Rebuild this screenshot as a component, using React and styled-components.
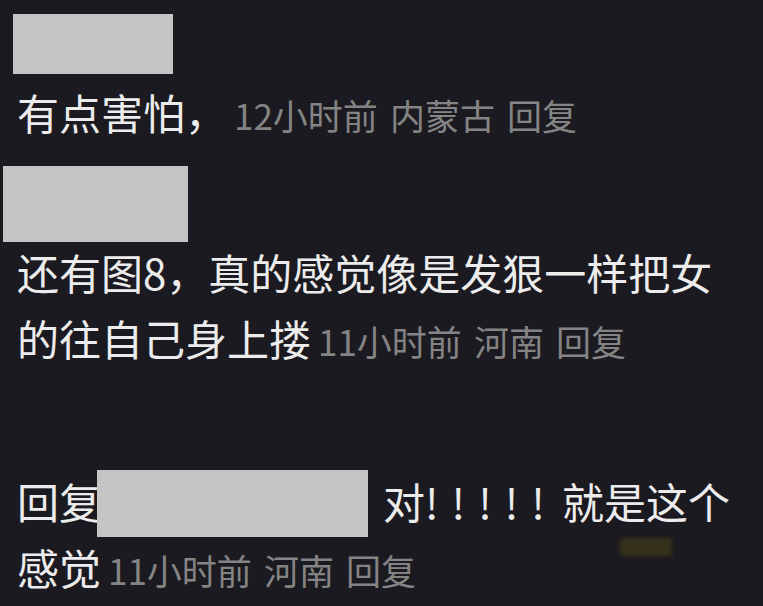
import React from "react";
import styled, { createGlobalStyle } from "styled-components";

const GlobalStyle = createGlobalStyle`
  html, body {
    margin: 0;
    padding: 0;
    background: #1b1a20;
  }
  body {
    font-family: "Noto Sans CJK SC", "Noto Sans", sans-serif;
  }
`;

const Page = styled.div`
  position: relative;
  width: 763px;
  height: 606px;
  overflow: hidden;
  background: #1b1a20;
  padding: 14px 16px 0 17px;
  box-sizing: border-box;
`;

const Comment = styled.div`
  display: flex;
  flex-direction: column;
  margin-top: ${({ $gap }) => $gap || 0}px;
`;

const NameMask = styled.div`
  width: ${({ $w }) => $w}px;
  height: ${({ $h }) => $h}px;
  margin-left: ${({ $offset }) => $offset || 0}px;
  margin-bottom: ${({ $after }) => $after || 0}px;
  background: #c5c5c5;
  flex-shrink: 0;
`;

const Body = styled.p`
  margin: 0;
  width: 720px;
  font-size: 42px;
  line-height: 66px;
  color: #ececec;
`;

const Row = styled.div`
  display: flex;
  align-items: flex-start;
  height: 66px;
  font-size: 42px;
  line-height: 66px;
  color: #ececec;
  white-space: nowrap;
`;

const InlineMask = styled(NameMask)`
  margin-top: 2px;
`;

const Reply = styled.span`
  margin-left: 15px;
`;

const Bang = styled.span`
  letter-spacing: 13px;
  margin-right: 4px;
`;

const MetaWrap = styled.span`
  font-size: 35px;
  line-height: 36px;
  color: #848484;
  margin-left: 7px;
`;

const MetaItem = styled.span`
  & + & {
    margin-left: 12px;
  }
`;

const Smudge = styled.div`
  position: absolute;
  left: 620px;
  top: 538px;
  width: 52px;
  height: 18px;
  background: #36321a;
  filter: blur(2px);
`;

const Meta = ({ time, place }) => (
  <MetaWrap>
    <MetaItem>{time}</MetaItem>
    <MetaItem>{place}</MetaItem>
    <MetaItem>回复</MetaItem>
  </MetaWrap>
);

export default function App() {
  return (
    <>
      <GlobalStyle />
      <Page>
        <Comment>
          <NameMask $w={160} $h={60} $offset={-4} $after={5} />
          <Body>
            有点害怕，
            <Meta time="12小时前" place="内蒙古" />
          </Body>
        </Comment>

        <Comment $gap={21}>
          <NameMask $w={185} $h={76} $offset={-14} $after={-3} />
          <Body>
            还有图8，真的感觉像是发狠一样把女的往自己身上搂
            <Meta time="11小时前" place="河南" />
          </Body>
        </Comment>

        <Comment $gap={97}>
          <Row>
            回复
            <InlineMask $w={271} $h={67} $offset={-4} />
            <Reply>对</Reply>
            <Bang>!!!!!</Bang>
            就是这个
          </Row>
          <Body>
            感觉
            <Meta time="11小时前" place="河南" />
          </Body>
        </Comment>

        <Smudge />
      </Page>
    </>
  );
}
